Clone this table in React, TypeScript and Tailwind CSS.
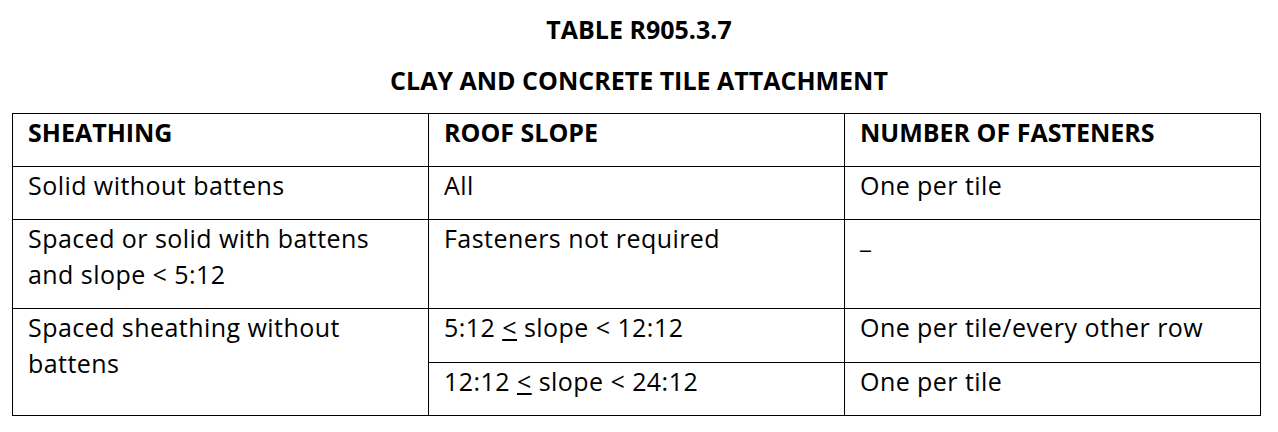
import React from "react";

const font = { fontFamily: "'Open Sans', 'Noto Sans', sans-serif" };

export default function App() {
  const cell = "border border-black align-top pl-[15px] pr-2 pt-0 leading-[36px] text-[25px] tracking-[0.45px] text-black";
  const head = "border border-black align-top pl-[15px] pr-2 pt-0 leading-[36px] text-[25px] font-bold text-black";
  return (
    <div className="bg-white w-[1278px] h-[432px] overflow-hidden" style={font}>
      <div className="pt-[11px] text-center font-bold text-[25px] leading-[36px] text-black">TABLE R905.3.7</div>
      <div className="pt-[15px] text-center font-bold text-[25px] leading-[36px] text-black">CLAY AND CONCRETE TILE ATTACHMENT</div>
      <table className="ml-[12px] mt-[15px] border-collapse w-[1248px] table-fixed">
        <colgroup>
          <col className="w-[416px]" />
          <col className="w-[416px]" />
          <col className="w-[416px]" />
        </colgroup>
        <tbody>
          <tr className="h-[53px]">
            <td className={head}>SHEATHING</td>
            <td className={head}>ROOF SLOPE</td>
            <td className={head}>NUMBER OF FASTENERS</td>
          </tr>
          <tr className="h-[53px]">
            <td className={cell}>Solid without battens</td>
            <td className={cell}>All</td>
            <td className={cell}>One per tile</td>
          </tr>
          <tr className="h-[89px]">
            <td className={cell}>Spaced or solid with battens<br />and slope &lt; 5:12</td>
            <td className={cell}>Fasteners not required</td>
            <td className={cell}>_</td>
          </tr>
          <tr className="h-[54px]">
            <td className={cell} rowSpan={2}>Spaced sheathing without<br />battens</td>
            <td className={cell}>5:12 <u>&lt;</u> slope &lt; 12:12</td>
            <td className={cell}>One per tile/every other row</td>
          </tr>
          <tr className="h-[53px]">
            <td className={cell}>12:12 <u>&lt;</u> slope &lt; 24:12</td>
            <td className={cell}>One per tile</td>
          </tr>
        </tbody>
      </table>
    </div>
  );
}
